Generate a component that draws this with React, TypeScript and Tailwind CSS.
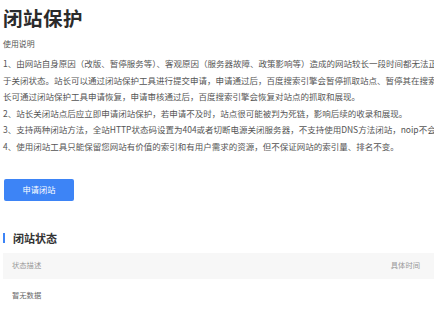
const lines = [
  "1、由网站自身原因（改版、暂停服务等）、客观原因（服务器故障、政策影响等）造成的网站较长一段时间都无法正常访问，网站处",
  "于关闭状态。站长可以通过闭站保护工具进行提交申请，申请通过后，百度搜索引擎会暂停抓取站点、暂停其在搜索结果中的展现。待网站恢复正常后，站",
  "长可通过闭站保护工具申请恢复，申请审核通过后，百度搜索引擎会恢复对站点的抓取和展现。",
  "2、站长关闭站点后应立即申请闭站保护，若申请不及时，站点很可能被判为死链，影响后续的收录和展现。",
  "3、支持两种闭站方法，全站HTTP状态码设置为404或者切断电源关闭服务器，不支持使用DNS方法闭站，noip不会通过审核。",
  "4、使用闭站工具只能保留您网站有价值的索引和有用户需求的资源，但不保证网站的索引量、排名不变。",
];

const App = () => {
  return (
    <div className="w-[434px] h-[313px] overflow-hidden bg-white font-['Noto_Sans_CJK_SC','Noto_Sans',sans-serif]">
      <div className="pl-[3px] pt-[5px]">
        <h1 className="text-[19.5px] leading-[26px] font-bold text-[#2b2b2b] tracking-[0.5px]">闭站保护</h1>

        <p className="mt-[7px] text-[7.9px] leading-[12px] text-[#555]">使用说明</p>
        <div className="mt-[5px] text-[8.5px] leading-[16.6px] text-[#555] whitespace-nowrap">
          {lines.map((l) => (
            <div key={l}>{l}</div>
          ))}
        </div>

        <button className="mt-[24px] ml-[1px] w-[70px] h-[22px] rounded-[2px] bg-[#3d84f6] text-white text-[8.2px] flex items-center justify-center">
          申请闭站
        </button>

        <div className="mt-[30px] flex items-center gap-[8px]">
          <div className="w-[2px] h-[10px] bg-[#3d84f6]" />
          <h2 className="text-[11px] leading-[14px] font-bold text-[#333]">闭站状态</h2>
        </div>

        <div className="mt-[8px]">
          <div className="h-[26px] bg-[#f7f7f7] flex items-center justify-between pl-[9px] pr-[14px] text-[7.3px] text-[#999]">
            <span>状态描述</span>
            <span>具体时间</span>
          </div>
          <div className="h-[34px] flex items-center pl-[9px] text-[7.3px] text-[#666]">暂无数据</div>
        </div>
      </div>
    </div>
  );
};

export default App;
